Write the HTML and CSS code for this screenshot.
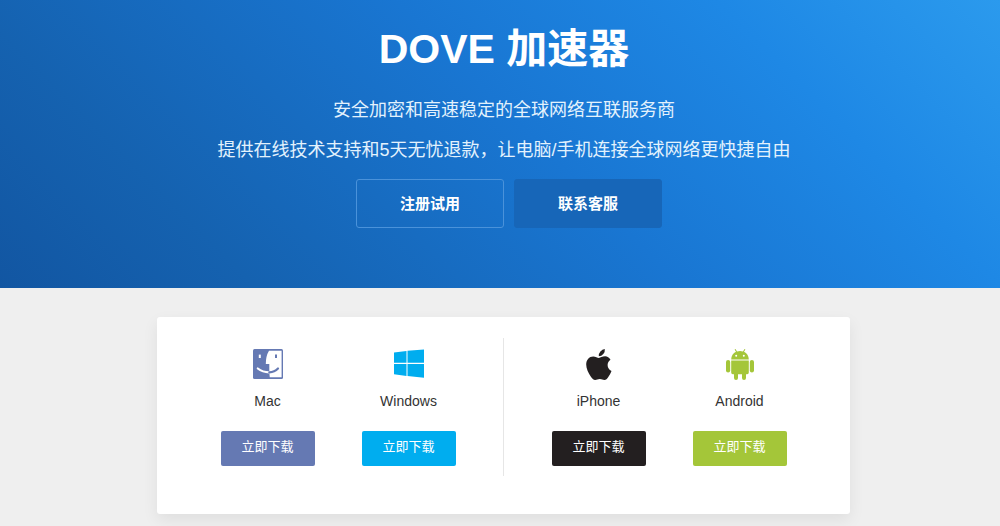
FILE: index.html
```html
<!DOCTYPE html>
<html lang="zh-CN">
<head>
    <meta charset="UTF-8">
    <meta name="viewport" content="width=device-width, initial-scale=1.0">
    <title>DOVE 加速器</title>
    <link rel="stylesheet" href="styles.css">
</head>
<body>

    <header class="hero">
        <h1>DOVE 加速器</h1>
        <p>安全加密和高速稳定的全球网络互联服务商</p>
        <p>提供在线技术支持和5天无忧退款，让电脑/手机连接全球网络更快捷自由</p>
        <div class="hero-buttons">
            <a class="hero-btn outline" href="#register">注册试用</a>
            <a class="hero-btn solid" href="#contact">联系客服</a>
        </div>
    </header>

    <main class="content">
        <div class="card">
            <div class="group">
                <div class="platform mac">
                    <svg class="icon" viewBox="0 0 32 32" aria-hidden="true">
                        <rect x="1" y="1" width="30" height="30" rx="1.5" fill="#6579b3"/>
                        <path d="M17 2.8H29.6V29.2H17.8Q17.3 26 17.3 22.5V16H13.8Q13.8 8 17 2.8Z" fill="#fff"/>
                        <path d="M7.8 6.6v3.4" stroke="#fff" stroke-width="2"/>
                        <path d="M24 6.6v3.4" stroke="#6579b3" stroke-width="2"/>
                        <path d="M5.8 20.5Q10.5 24.3 17.3 24.3" fill="none" stroke="#fff" stroke-width="2.2" stroke-linecap="round"/>
                        <path d="M17.3 24.3Q22.5 24.2 26 20.5" fill="none" stroke="#6579b3" stroke-width="2.2" stroke-linecap="round"/>
                    </svg>
                    <h2>Mac</h2>
                    <a class="download" href="#mac">立即下载</a>
                </div>
                <div class="platform windows">
                    <svg class="icon" viewBox="0 0 32 32" aria-hidden="true">
                        <path d="M1 4.5L13.5 2.9V14.7H1ZM14.5 2.7L31 1.6V14.7H14.5ZM1 16H13.5V27.9L1 26.2ZM14.5 16H31V29.8L14.5 28Z" fill="#00adef"/>
                    </svg>
                    <h2>Windows</h2>
                    <a class="download" href="#windows">立即下载</a>
                </div>
            </div>
            <div class="group">
                <div class="platform iphone">
                    <svg class="icon" viewBox="0 0 32 32" aria-hidden="true">
                        <path d="M21.8 1Q22.2 3.8 20.3 6T15.8 8.2Q15.5 5.6 17.4 3.5T21.8 1Z" fill="#231f20"/>
                        <path d="M27.5 11.8C25.8 12.9 24.6 14.8 24.6 17.1C24.6 19.8 26.1 22 28.5 23C27.8 25.1 26.7 27.1 25.3 29C24.1 30.7 23 32 21.4 32C19.6 32 19 31 16.8 31C14.7 31 13.9 32 12.2 32C10.4 32 9.2 30.6 7.9 28.8C5.3 25.2 3.2 20.6 3.2 16.6C3.2 11.6 6.3 8.4 10.2 8.4C12.6 8.4 14.4 9.9 15.9 9.9C17.3 9.9 19.4 8.3 22.1 8.3C24.4 8.3 26.2 9.6 27.5 11.8Z" fill="#231f20"/>
                    </svg>
                    <h2>iPhone</h2>
                    <a class="download" href="#iphone">立即下载</a>
                </div>
                <div class="platform android">
                    <svg class="icon" viewBox="0 0 32 32" aria-hidden="true">
                        <g fill="#a4c639">
                            <path d="M7.2 11.5C7.2 8 9.1 5.2 12 3.8L10.6 1.5L11.5 1L13 3.4Q16 2.4 19 3.4L20.5 1L21.4 1.5L20 3.8C22.9 5.2 24.8 8 24.8 11.5Z"/>
                            <path d="M7.2 12.5H24.8V24.6Q24.8 26.2 23.2 26.2H22V30Q22 32 20 32T18 30V26.2H14V30Q14 32 12 32T10 30V26.2H8.8Q7.2 26.2 7.2 24.6Z"/>
                            <rect x="2" y="12" width="4.2" height="12.5" rx="2.1"/>
                            <rect x="25.8" y="12" width="4.2" height="12.5" rx="2.1"/>
                        </g>
                        <circle cx="12.2" cy="7.8" r="1" fill="#fff"/>
                        <circle cx="19.8" cy="7.8" r="1" fill="#fff"/>
                    </svg>
                    <h2>Android</h2>
                    <a class="download" href="#android">立即下载</a>
                </div>
            </div>
        </div>
    </main>

</body>
</html>
```

FILE: styles.css
```css
* {
    box-sizing: border-box;
}

body {
    font-family: "Liberation Sans", "Noto Sans CJK SC", sans-serif;
    margin: 0;
    background-color: #efefef;
}

.hero {
    padding: 21px 0 60px 8px;
    text-align: center;
    color: #ffffff;
    background: linear-gradient(45deg, #1256a2 0%, #1562b0 20%, #1976d2 53%, #1e88e5 78%, #2b9aed 100%);
}

.hero h1 {
    margin: 0 0 19px;
    font-size: 41px;
    line-height: 56px;
    font-weight: bold;
}

.hero p {
    margin: 0 0 12px;
    font-size: 18px;
    line-height: 28px;
    color: #e3f2fd;
}

.hero-buttons {
    display: flex;
    justify-content: center;
    padding-top: 3px;
}

.hero-btn {
    width: 148px;
    margin-left: 10px;
    border: 1px solid transparent;
    border-radius: 3px;
    font-size: 15px;
    line-height: 47px;
    font-weight: bold;
    color: #ffffff;
    text-decoration: none;
}

.hero-btn.outline {
    border-color: #4a92da;
}

.hero-btn.solid {
    background-color: #1766b8;
    border-color: #1766b8;
}

.content {
    padding: 29px 20px 12px 27px;
}

.card {
    display: flex;
    max-width: 693px;
    margin: 0 auto;
    padding: 21px 16px 38px;
    background-color: #ffffff;
    border-radius: 3px;
    box-shadow: 0 6px 16px rgba(0, 0, 0, 0.07);
}

.group {
    flex: 1;
    display: flex;
    justify-content: center;
    gap: 47px;
    padding: 10px 0;
}

.group + .group {
    border-left: 1px solid #e6e6e6;
}

.platform {
    width: 94px;
    text-align: center;
}

.icon {
    display: block;
    width: 32px;
    height: 32px;
    margin: 0 auto;
}

.platform h2 {
    margin: 11px 0 19px;
    font-size: 14px;
    line-height: 21px;
    font-weight: normal;
    color: #333333;
}

.download {
    display: block;
    padding-bottom: 3px;
    border-radius: 2px;
    font-size: 13px;
    line-height: 32px;
    color: #ffffff;
    text-decoration: none;
}

.mac .download {
    background-color: #6579b3;
}

.windows .download {
    background-color: #00adef;
}

.iphone .download {
    background-color: #231f20;
}

.android .download {
    background-color: #a4c639;
}
```
